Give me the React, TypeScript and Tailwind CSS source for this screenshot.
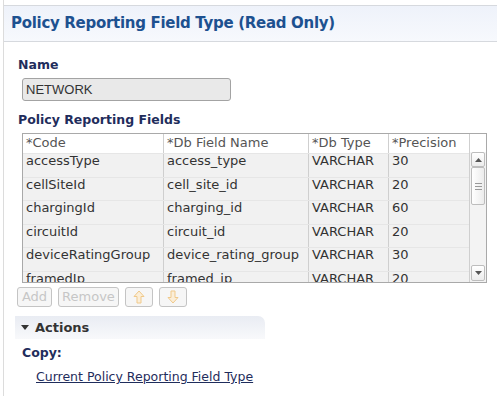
const ROWS = [
  ["accessType", "access_type", "VARCHAR", "30"],
  ["cellSiteId", "cell_site_id", "VARCHAR", "20"],
  ["chargingId", "charging_id", "VARCHAR", "60"],
  ["circuitId", "circuit_id", "VARCHAR", "20"],
  ["deviceRatingGroup", "device_rating_group", "VARCHAR", "30"],
  ["framedIp", "framed_ip", "VARCHAR", "20"],
];

function ArrowBtn({ up }: { up?: boolean }) {
  return (
    <button className="w-[28px] h-[20px] flex items-center justify-center border border-[#c4c4c4] rounded-[3px] bg-[#f6f6f6]">
      <svg width="12" height="14" viewBox="0 0 12 14" className={up ? "" : "rotate-180"}>
        <path d="M6 1 L11 6.5 L8 6.5 L8 13 L4 13 L4 6.5 L1 6.5 Z" fill="#fbeed8" stroke="#f0c98a" strokeWidth="1" />
      </svg>
    </button>
  );
}

export default function App() {
  return (
    <div className="w-[497px] h-[396px] bg-white overflow-hidden font-['DejaVu_Sans',sans-serif] text-[#333]">
      <div className="ml-[3px] h-full border-l border-[#dcdcdc] pt-[5px]">
        <div className="h-[37px] border-y border-[#d6d9de] bg-gradient-to-b from-[#eef2fa] to-[#f7f9fd] flex items-center pl-[7px]">
          <h1 className="text-[#1d5190] font-bold text-[15px] tracking-[-0.3px]">
            Policy Reporting Field Type (Read Only)
          </h1>
        </div>

        <div className="pl-[14px] pt-[15px]">
          <div className="text-[#1f2d5c] font-bold text-[12.5px] leading-[16px]">Name</div>
          <div className="ml-[4px] mt-[5px] w-[209px] h-[23px] rounded-[3px] border border-[#a3a3a3] bg-[#e9e9e9] flex items-center pl-[3px] text-[#333] font-['Liberation_Sans',sans-serif] text-[13px]">
            NETWORK
          </div>

          <div className="mt-[11px] text-[#1f2d5c] font-bold text-[12.5px] leading-[16px]">Policy Reporting Fields</div>

          <div className="ml-[4px] mt-[5px] w-[465px] h-[150px] border border-[#a9a9a9] flex overflow-hidden text-[13px]">
            <div className="flex-1">
              <div className="grid grid-cols-[141px_145px_80px_80px] h-[19px] bg-white text-[#555] leading-[18px]">
                <div className="pl-[3px] border-r border-[#cfcfcf]">*Code</div>
                <div className="pl-[3px] border-r border-[#cfcfcf]">*Db Field Name</div>
                <div className="pl-[3px] border-r border-[#cfcfcf]">*Db Type</div>
                <div className="pl-[3px]">*Precision</div>
              </div>
              {ROWS.map((r) => (
                <div key={r[0]} className="grid grid-cols-[141px_145px_80px_80px] h-[23.6px] bg-[#f1f1f1] border-t border-[#e6e6e6] leading-[14px] text-[#333]">
                  <div className="pl-[3px] border-r border-[#cfcfcf]">{r[0]}</div>
                  <div className="pl-[3px] border-r border-[#cfcfcf]">{r[1]}</div>
                  <div className="pl-[3px] border-r border-[#cfcfcf]">{r[2]}</div>
                  <div className="pl-[3px]">{r[3]}</div>
                </div>
              ))}
            </div>
            <div className="w-[18px] border-l border-[#cfcfcf] bg-[#f3f3f3] flex flex-col">
              <div className="h-[18px] bg-white" />
              <div className="h-[15px] mx-[1px] border border-[#bdbdbd] rounded-[2px] bg-gradient-to-b from-white to-[#ececec] flex items-center justify-center">
                <svg width="7" height="4" viewBox="0 0 7 4"><path d="M0 4 L3.5 0 L7 4 Z" fill="#555" /></svg>
              </div>
              <div className="h-[38px] mx-[1px] border border-[#bdbdbd] rounded-[2px] bg-gradient-to-r from-white to-[#ececec] flex flex-col items-center justify-center gap-[2px]">
                <div className="w-[7px] h-px bg-[#9a9a9a]" />
                <div className="w-[7px] h-px bg-[#9a9a9a]" />
                <div className="w-[7px] h-px bg-[#9a9a9a]" />
              </div>
              <div className="flex-1" />
              <div className="h-[16px] mx-[1px] mb-[1px] border border-[#bdbdbd] rounded-[2px] bg-gradient-to-b from-white to-[#ececec] flex items-center justify-center">
                <svg width="7" height="4" viewBox="0 0 7 4"><path d="M0 0 L3.5 4 L7 0 Z" fill="#555" /></svg>
              </div>
            </div>
          </div>

          <div className="-ml-[1px] mt-[4px] flex gap-[6px] text-[13px] text-[#c6c6c6]">
            <button className="w-[35px] h-[20px] border border-[#c4c4c4] rounded-[3px] bg-[#f6f6f6] leading-[18px]">Add</button>
            <button className="w-[61px] h-[20px] border border-[#c4c4c4] rounded-[3px] bg-[#f6f6f6] leading-[18px]">Remove</button>
            <ArrowBtn up />
            <ArrowBtn />
          </div>

          <div className="-ml-[3px] mt-[9px] w-[250px] h-[23px] rounded-tr-[7px] bg-gradient-to-b from-[#e9ecf3] to-[#f8f9fb] flex items-center pl-[6px] text-[#333] font-bold text-[13px]">
            <svg width="8" height="5" viewBox="0 0 8 5" className="mr-[6px]"><path d="M0 0 L8 0 L4 5 Z" fill="#333" /></svg>
            Actions
          </div>

          <div className="mt-[6px] ml-[4px] text-[#1f2d5c] font-bold text-[12.5px] leading-[16px]">Copy:</div>
          <div className="mt-[3px] ml-[18px]">
            <a className="text-[#1f2d5c] underline text-[12.5px]">Current Policy Reporting Field Type</a>
          </div>
        </div>
      </div>
    </div>
  );
}
